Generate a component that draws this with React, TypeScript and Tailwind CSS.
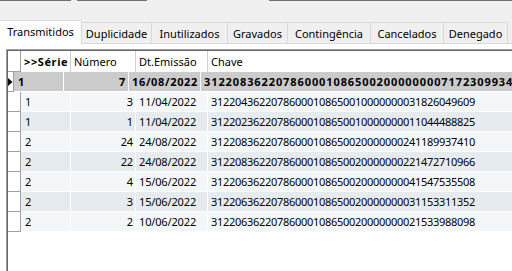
import React from "react";

type Row = { serie: string; numero: string; data: string; chave: string };

const rows: Row[] = [
  { serie: "1", numero: "7", data: "16/08/2022", chave: "31220836220786000108650020000000071723099346" },
  { serie: "1", numero: "3", data: "11/04/2022", chave: "31220436220786000108650010000000031826049609" },
  { serie: "1", numero: "1", data: "11/04/2022", chave: "31220236220786000108650010000000011044488825" },
  { serie: "2", numero: "24", data: "24/08/2022", chave: "31220836220786000108650020000000241189937410" },
  { serie: "2", numero: "22", data: "24/08/2022", chave: "31220836220786000108650020000000221472710966" },
  { serie: "2", numero: "4", data: "15/06/2022", chave: "31220636220786000108650020000000041547535508" },
  { serie: "2", numero: "3", data: "15/06/2022", chave: "31220636220786000108650020000000031153311352" },
  { serie: "2", numero: "2", data: "10/06/2022", chave: "31220636220786000108650020000000021533988098" },
];

const tabs = [
  { label: "Duplicidade", w: "w-[70px]" },
  { label: "Inutilizados", w: "w-[76px]" },
  { label: "Gravados", w: "w-[60px]" },
  { label: "Contingência", w: "w-[83px]" },
  { label: "Cancelados", w: "w-[73px]" },
  { label: "Denegado", w: "w-[64px]" },
];

export default function App() {
  return (
    <div className="w-[512px] h-[271px] overflow-hidden bg-[#f0f0f0] flex flex-col text-[11px] leading-none text-black [font-family:'Noto_Sans',sans-serif]">
      {/* remnants of controls above */}
      <div className="flex h-[1px] shrink-0">
        <div className="w-[71px] bg-[#707070]" />
        <div className="w-[6px]" />
        <div className="w-[70px] bg-[#707070]" />
        <div className="w-[122px]" />
        <div className="flex-1 bg-[#707070]" />
      </div>
      <div className="h-[19px] shrink-0" />

      {/* tabs */}
      <div className="flex items-end h-[23px] shrink-0 relative z-10">
        <div className="w-[82px] h-[24px] -mb-px bg-white border-t border-r border-[#d9d9d9] flex items-center justify-center pb-[2px]">
          Transmitidos
        </div>
        {tabs.map((t) => (
          <div
            key={t.label}
            className={`${t.w} h-[21px] border-t border-r border-[#d9d9d9] bg-[#f0f0f0] flex items-center justify-center`}
          >
            {t.label}
          </div>
        ))}
      </div>

      {/* tab sheet */}
      <div className="flex-1 bg-white border-t border-[#d9d9d9] pt-[5px] pl-[6px] flex flex-col min-h-0">
        <div className="flex-1 border-l border-t border-[#a0a0a0] flex flex-col min-h-0">
          <div className="flex-1 border-l border-t border-[#696969] bg-white flex flex-col overflow-hidden">
            {/* header */}
            <div className="flex h-[21px] shrink-0 bg-white">
              <div className="w-[13px] border-r border-b border-[#a0a0a0]" />
              <div className="w-[50px] border-r border-[#d0d0d0] flex items-center pl-[3px] font-bold tracking-[0.6px]">
                &gt;&gt;Série
              </div>
              <div className="w-[65px] border-r border-[#d0d0d0] flex items-center pl-[3px]">Número</div>
              <div className="w-[72px] border-r border-[#d0d0d0] flex items-center pl-[3px]">Dt.Emissão</div>
              <div className="flex-1 flex items-center pl-[3px]">Chave</div>
            </div>
            {rows.map((r, i) => {
              const sel = i === 0;
              const bg = sel ? "bg-[#cbcbcb]" : i % 2 === 1 ? "bg-[#f4f7fa]" : "bg-[#e6ebf0]";
              return (
                <div key={i} className="flex h-[20px] shrink-0">
                  <div className="w-[13px] border-r border-b border-[#a0a0a0] bg-white flex items-center justify-center">
                    {sel && (
                      <svg width="5" height="8" viewBox="0 0 5 8">
                        <polygon points="0,0 4.5,4 0,8" fill="#000" />
                      </svg>
                    )}
                  </div>
                  <div className={`flex flex-1 border-b border-white ${bg} ${sel ? "font-bold" : ""}`}>
                    <div className="w-[50px] border-r border-white flex items-center pl-[4px]">{r.serie}</div>
                    <div
                      className={`w-[65px] border-r border-white flex items-center justify-end pr-[2px] ${sel ? "tracking-[0.6px]" : "tracking-[-0.15px]"}`}
                    >
                      {r.numero}
                    </div>
                    <div
                      className={`w-[72px] border-r border-white flex items-center pl-[3px] whitespace-nowrap ${sel ? "tracking-[0.65px]" : "tracking-[-0.15px]"}`}
                    >
                      {r.data}
                    </div>
                    <div
                      className={`flex-1 flex items-center pl-[3px] whitespace-nowrap overflow-hidden ${sel ? "tracking-[0.9px]" : "tracking-[-0.29px]"}`}
                    >
                      {r.chave}
                    </div>
                  </div>
                </div>
              );
            })}
            <div className="flex-1 bg-white" />
          </div>
        </div>
      </div>
    </div>
  );
}
